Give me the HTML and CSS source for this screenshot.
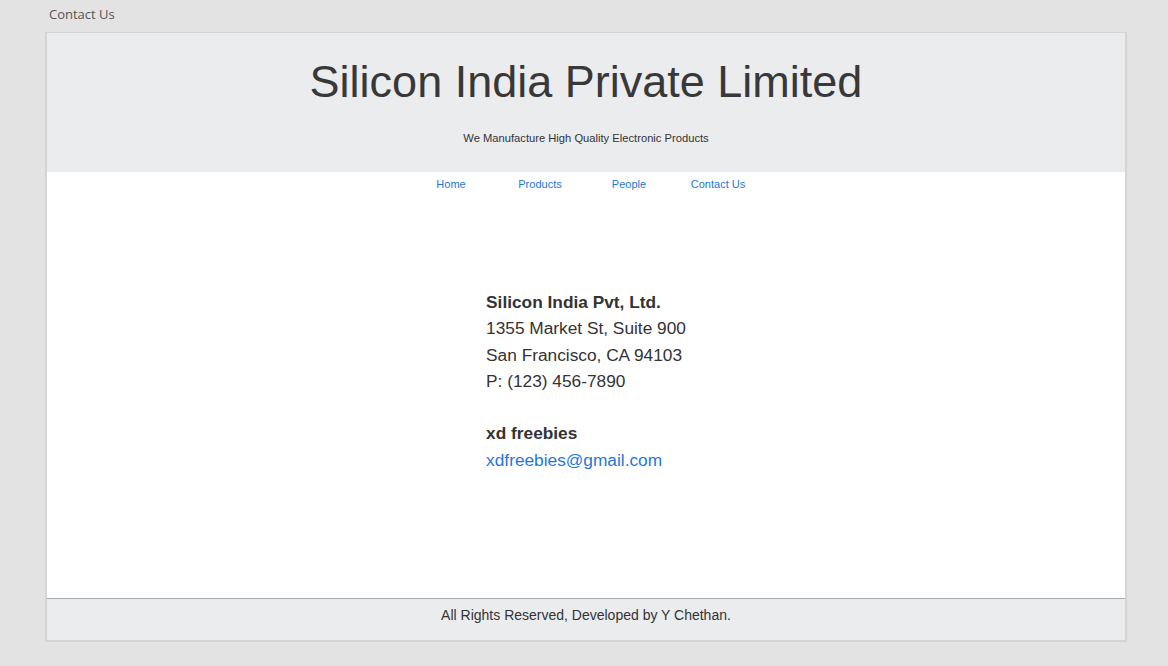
FILE: index.html
```html
<!DOCTYPE html>
<html>
<head>
<meta charset="utf-8">
<link rel="stylesheet" href="styles.css">
</head>
<body>
<div class="topbar">Contact Us</div>
<div class="page">
  <header class="header">
    <h1 class="title">Silicon India Private Limited</h1>
    <p class="tagline">We Manufacture High Quality Electronic Products</p>
  </header>
  <nav class="nav">
    <a class="nav-link" href="#">Home</a>
    <a class="nav-link" href="#">Products</a>
    <a class="nav-link" href="#">People</a>
    <a class="nav-link" href="#">Contact Us</a>
  </nav>
  <main class="content">
    <div class="address">
      <div class="strong">Silicon India Pvt, Ltd.</div>
      <div>1355 Market St, Suite 900</div>
      <div>San Francisco, CA 94103</div>
      <div>P: (123) 456-7890</div>
      <div class="blank">&nbsp;</div>
      <div class="strong">xd freebies</div>
      <a class="mail" href="#">xdfreebies@gmail.com</a>
    </div>
  </main>
  <footer class="footer">All Rights Reserved, Developed by Y Chethan.</footer>
</div>
</body>
</html>
```
FILE: styles.css
```css
html, body {
  margin: 0;
  padding: 0;
  background: #e3e3e3;
}
body {
  font-family: "Liberation Sans", Arial, sans-serif;
  color: #333;
}
.topbar {
  height: 32px;
  padding-left: 49px;
  box-sizing: border-box;
  padding-top: 5px;
  font-family: "Open Sans", "Noto Sans", sans-serif;
  font-size: 13px;
  color: #555;
  line-height: 18px;
}
.page {
  margin-left: 45px;
  width: 1082px;
  box-sizing: border-box;
  border: 2px solid #d4d4d4;
  border-top-width: 1px;
  background: #fff;
}
.header {
  background: #ebecee;
  height: 139px;
  box-sizing: border-box;
  padding-top: 23px;
  text-align: center;
}
.title {
  margin: 0;
  font-weight: normal;
  font-size: 45px;
  line-height: 52px;
  color: #383838;
}
.tagline {
  margin: 23px 0 0;
  font-size: 11.2px;
  line-height: 14px;
  color: #333;
}
.nav {
  display: flex;
  justify-content: center;
  padding-top: 5px;
  padding-right: 3px;
  height: 24px;
}
.nav-link {
  width: 89px;
  text-align: center;
  font-size: 11px;
  line-height: 14px;
  color: #1f78d1;
  text-decoration: none;
}
.content {
  height: 397px;
  box-sizing: border-box;
  padding-top: 88px;
  text-align: center;
}
.address {
  display: inline-block;
  text-align: left;
  font-size: 17.3px;
  line-height: 26.3px;
  color: #333;
}
.strong {
  font-weight: bold;
}
.mail {
  color: #1f78d8;
  text-decoration: none;
}
.footer {
  background: #ebecee;
  border-top: 1px solid #a9a9a9;
  height: 42px;
  box-sizing: border-box;
  text-align: center;
  font-size: 14px;
  line-height: 32px;
  color: #333;
}
```
